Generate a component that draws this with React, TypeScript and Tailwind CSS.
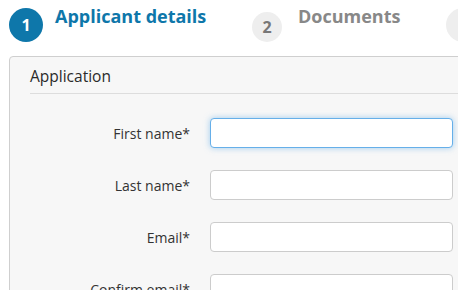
const fields = ['First name*', 'Last name*', 'Email*', 'Confirm email*']

function Step({ n, label, active, width }: { n: number; label: string; active?: boolean; width: string }) {
  return (
    <div className={`flex items-start shrink-0 ${width}`}>
      {active ? (
        <div className="w-[34px] h-[34px] rounded-full bg-[#0e77aa] text-white font-bold text-[16px] flex items-center justify-center shrink-0">
          {n}
        </div>
      ) : (
        <div className="w-[30px] h-[30px] mt-[4px] rounded-full bg-[#eeeeee] text-[#777] font-bold text-[16px] flex items-center justify-center shrink-0">
          {n}
        </div>
      )}
      {label && (
        <div
          className={`mt-[-4px] text-[18px] font-bold leading-[24px] ${
            active ? 'ml-[12px] text-[#0e77aa]' : 'ml-[16px] text-[#888]'
          }`}
        >
          {label}
        </div>
      )}
    </div>
  )
}

export default function App() {
  return (
    <div className="w-[458px] h-[290px] overflow-hidden bg-white font-['Open_Sans',sans-serif] text-[#333]">
      {/* Steps */}
      <div className="flex pl-[9px] pt-[8px] h-[56px]">
        <Step n={1} label="Applicant details" active width="w-[243px]" />
        <Step n={2} label="Documents" width="w-[194px]" />
        <div className="w-[34px] h-[34px] rounded-full bg-[#eeeeee] shrink-0" />
      </div>

      {/* Panel */}
      <div className="ml-[9px] w-[520px] border border-[#cfcfcf] rounded-[4px] bg-[#f7f7f7] pl-[20px] pt-[8px] pb-6">
        <div className="text-[15.5px] leading-[22px] pb-[6px] border-b border-[#dddddd] w-[430px] text-[#2a2a2a]">Application</div>
        <div className="flex flex-col gap-[22px] pt-[24px]">
          {fields.map((f, i) => (
            <div key={f} className="flex items-center">
              <label className="w-[160px] text-right text-[14px]">{f}</label>
              <input
                className={`ml-[20px] w-[243px] h-[30px] rounded-[4px] bg-white border outline-none ${
                  i === 0
                    ? 'border-[#66afe9] shadow-[0_0_6px_rgba(102,175,233,0.6)]'
                    : 'border-[#cccccc]'
                }`}
              />
            </div>
          ))}
        </div>
      </div>
    </div>
  )
}
